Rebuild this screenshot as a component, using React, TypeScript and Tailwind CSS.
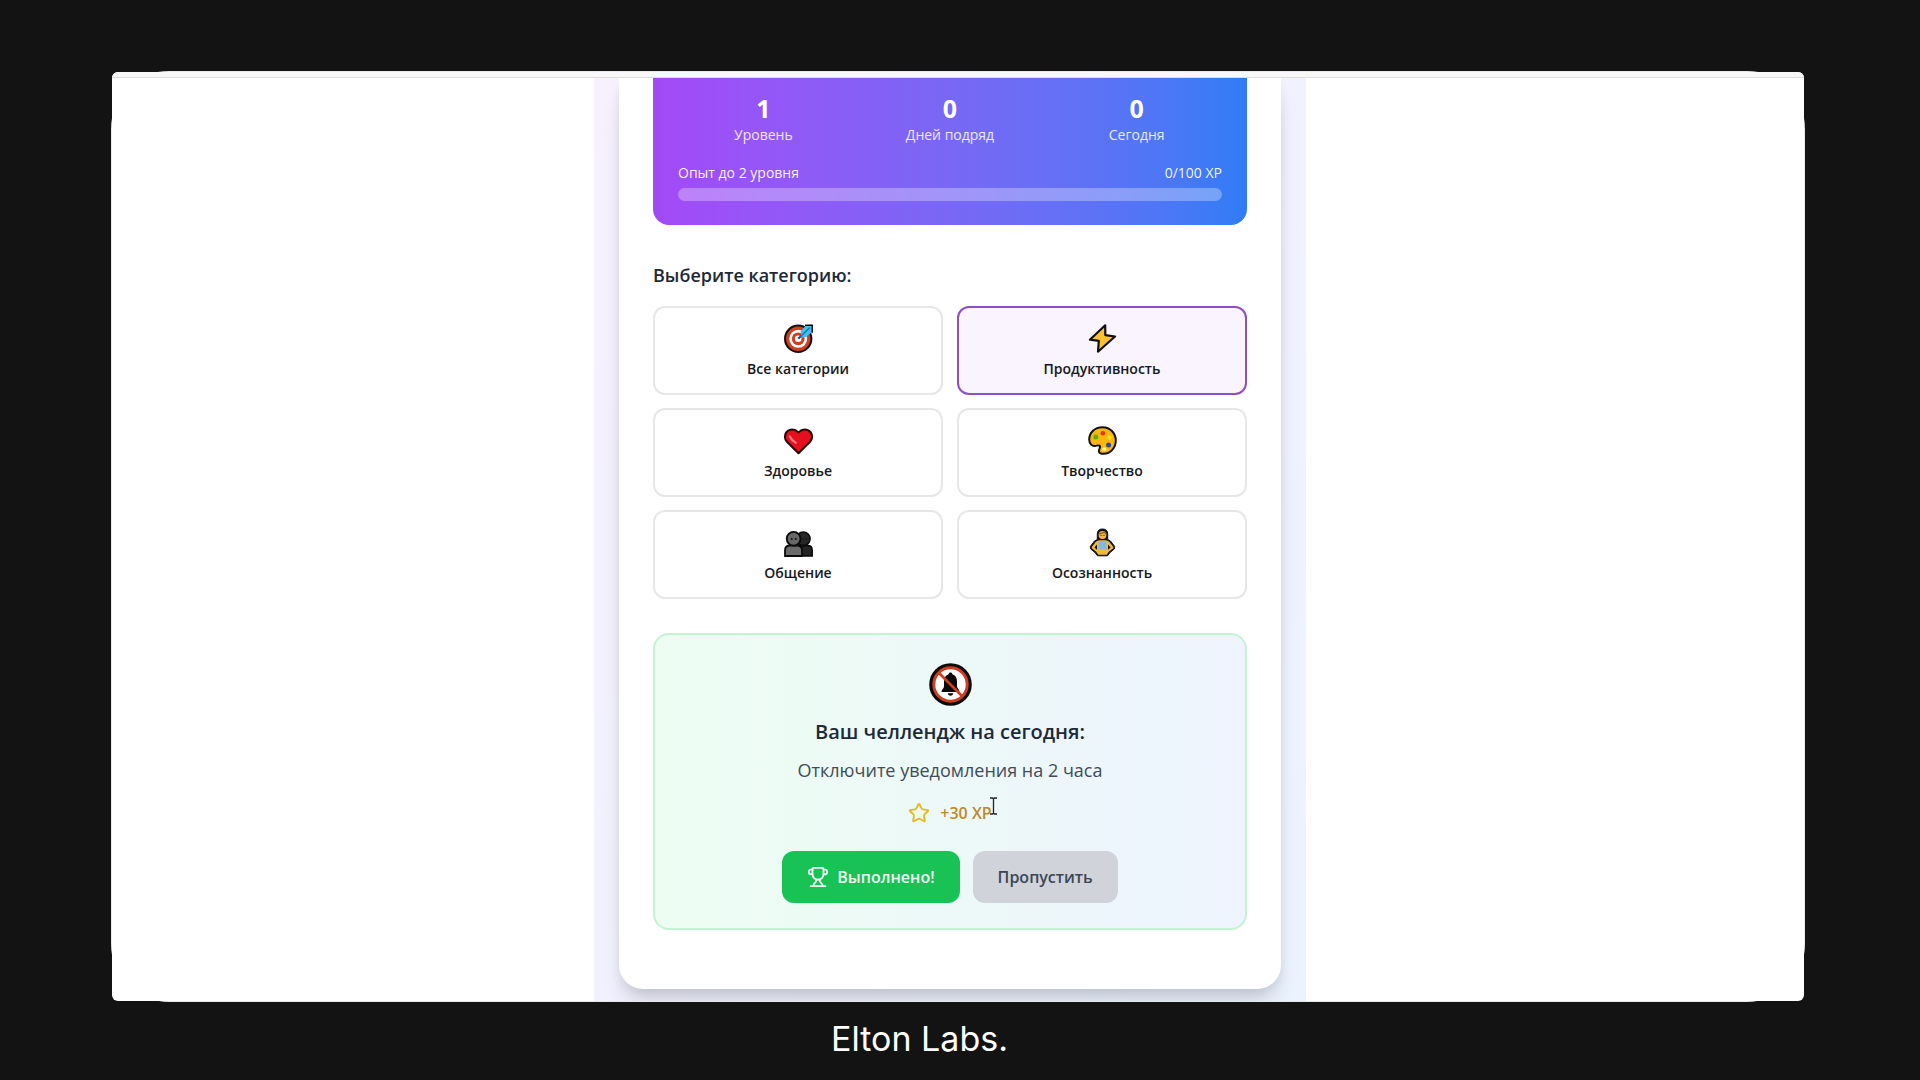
import { useState } from "react";
import type { ReactNode } from "react";
import { Star, Trophy } from "lucide-react";

function TargetIcon() {
  return (
    <svg viewBox="0 0 29 29" className="size-[29px]" aria-hidden="true">
      <circle cx="14.2" cy="14.8" r="13.2" fill="#cf3e20" stroke="#111" strokeWidth="2" />
      <circle cx="14.2" cy="14.8" r="9" fill="#fff" />
      <circle cx="14.2" cy="14.8" r="6.4" fill="#cf3e20" />
      <circle cx="14.2" cy="14.8" r="3.3" fill="#fff" />
      <path d="M14.2 14.8 20 9" stroke="#27476b" strokeWidth="2" />
      <path d="M16.5 7.5 22 1.3l3 .2.4-.9 2.8.2-.2 7.2-6.4 5.3-4.2.1Z" fill="#40c0f5" />
      <path d="m16.5 12.6 9.3-9" stroke="#1b7fb8" strokeWidth="1.6" />
      <path d="M21 1.2h7.3v7.5" fill="none" stroke="#111" strokeWidth="1.6" />
    </svg>
  );
}

function BoltIcon() {
  return (
    <svg viewBox="0 0 29 29" className="size-[29px]" aria-hidden="true">
      <path
        d="M17.2 1.3 1.9 15.7l8.9 1.2-.8 10.8L27 12.5l-9.7-1.4Z"
        fill="#fbc132"
        stroke="#111"
        strokeWidth="2.2"
        strokeLinejoin="round"
      />
    </svg>
  );
}

function HeartIcon() {
  return (
    <svg viewBox="0 0 29 29" className="size-[29px]" aria-hidden="true">
      <path
        d="M14.5 27.2 2.9 15.8C-.4 12.3.8 6.2 4.6 4.400c3.700-1.700 7.400-.6 9.900 2 2.500-2.600 6.200-3.700 9.900-2 3.800 1.800 5 7.900 1.700 11.400Z"
        fill="#e60f1e"
        stroke="#2a0508"
        strokeWidth="2"
        strokeLinejoin="round"
      />
      <path d="M5.700 10.500c1.300 2.600 3 4.600 6 6.300" fill="none" stroke="#fb7b83" strokeWidth="2.200" strokeLinecap="round" />
    </svg>
  );
}

function PaletteIcon() {
  return (
    <svg viewBox="0 0 29 29" className="size-[29px]" aria-hidden="true">
      <path
        d="M14.500 1.200C6.700 1.200 1.200 6.500 1.200 13.600c0 4.600 3 6.700 6 6.300 1.700-.2 3.200-.9 4.300-.2 1.900 1.300-.9 3.500-.6 5.600.3 1.800 2.300 2.500 4.600 2.500 7.200 0 12.300-6 12.300-13.200S22.500 1.200 14.500 1.200Z"
        fill="#fdb50f"
        stroke="#111"
        strokeWidth="2"
      />
      <circle cx="14.800" cy="7.300" r="2.300" fill="#dc3b16" />
      <circle cx="7.800" cy="11" r="2.500" fill="#54b30f" />
      <circle cx="21.600" cy="11.500" r="2.200" fill="#ffdd1a" />
      <circle cx="20.600" cy="19" r="2.500" fill="#2c4a96" />
      <circle cx="16.300" cy="23.300" r="2" fill="#fff3a8" />
    </svg>
  );
}

function PeopleIcon() {
  return (
    <svg viewBox="0 0 29 29" className="size-[29px]" aria-hidden="true">
      <path d="M14 28V22c0-3 2-4.500 4.500-4.500h5c3 0 4.700 2 4.700 4.700V28Z" fill="#222" stroke="#0a0a0a" strokeWidth="1.500" />
      <circle cx="19.300" cy="10.800" r="6.800" fill="#262626" stroke="#0a0a0a" strokeWidth="1.600" />
      <path d="M1 28V22.500c0-3 2-5 5-5h7c3 0 5 2 5 5V28Z" fill="#6b6b6b" stroke="#0a0a0a" strokeWidth="1.800" />
      <circle cx="9.600" cy="10.800" r="6.900" fill="#686868" stroke="#0a0a0a" strokeWidth="1.800" />
      <g fill="#0a0a0a">
        <circle cx="7.800" cy="11" r=".9" />
        <circle cx="11.800" cy="11" r=".9" />
        <circle cx="18.800" cy="11" r=".8" />
        <circle cx="22.300" cy="11" r=".8" />
      </g>
    </svg>
  );
}

function LotusIcon() {
  return (
    <svg viewBox="0 0 29 29" className="size-[29px]" aria-hidden="true">
      <path
        d="M9.300 11.500V6c0-3.400 2-5 5.200-5s5.200 1.600 5.200 5v5.500l2.800 1.500 4.200 5.500-.4 2.500-4.300 3.500-2.500 3.300H9.500L7 24.500 2.700 21l-.4-2.500L6.500 13Z"
        fill="#111"
        stroke="#111"
        strokeWidth="1"
        strokeLinejoin="round"
      />
      <path d="M8 13.500 3.700 19v1.300L8 23.500l2.300 3.300h8.400l2.300-3.300 4.300-3.200V19L21 13.500l-3-1.300h-7Z" fill="#f3b93f" />
      <path d="m9 16.500-2.600 3L9 21.700Zm11 0 2.600 3-2.600 2.200Z" fill="#111" />
      <path d="M10.500 13h8v8.500h-8Z" fill="#7fbbe8" />
      <circle cx="14.500" cy="7" r="3.900" fill="#f3b93f" />
      <path d="M11 5.500c2 .2 4-.4 5-1.500l2.300 2" fill="none" stroke="#9a5a24" strokeWidth="1.300" />
      <circle cx="13" cy="7.300" r=".6" fill="#111" />
      <circle cx="16" cy="7.300" r=".6" fill="#111" />
    </svg>
  );
}

function BellOffIcon() {
  return (
    <svg viewBox="0 0 43 43" className="size-[43px]" aria-hidden="true">
      <circle cx="21.500" cy="21.500" r="21.300" fill="#0b0b0b" />
      <circle cx="21.500" cy="21.500" r="16.700" fill="#fff" stroke="#cf3e20" strokeWidth="3" />
      <path
        d="M21.500 9.500c1 0 1.800.7 1.900 1.700 2.800 1 4.600 3.500 4.600 7v5.300c0 1.700 2.500 3 2.500 5.500h-18c0-2.500 2.500-3.800 2.500-5.500v-5.300c0-3.500 1.800-6 4.600-7 .1-1 .9-1.700 1.900-1.700Z"
        fill="#0b0b0b"
      />
      <path d="M18.700 30.300h5.600c-.3 1.600-1.300 2.500-2.800 2.500s-2.500-.9-2.800-2.500Z" fill="#0b0b0b" />
      <path d="m9.500 9.500 24 24" stroke="#cf3e20" strokeWidth="2.600" />
    </svg>
  );
}

const stats = [
  { value: "1", label: "Уровень" },
  { value: "0", label: "Дней подряд" },
  { value: "0", label: "Сегодня" },
];

const categories: { name: string; icon: ReactNode }[] = [
  { name: "Все категории", icon: <TargetIcon /> },
  { name: "Продуктивность", icon: <BoltIcon /> },
  { name: "Здоровье", icon: <HeartIcon /> },
  { name: "Творчество", icon: <PaletteIcon /> },
  { name: "Общение", icon: <PeopleIcon /> },
  { name: "Осознанность", icon: <LotusIcon /> },
];

function StatsCard() {
  return (
    <section className="rounded-b-2xl bg-linear-to-r from-[#a349f7] to-[#2f7cf5] px-[25px] pt-[14px] pb-6 text-white">
      <dl className="grid grid-cols-3 gap-4 text-center">
        {stats.map((s) => (
          <div key={s.label} className="flex flex-col-reverse">
            <dt className="text-[14px] leading-[22px] text-white/85">{s.label}</dt>
            <dd className="text-[25px] leading-8 font-bold">{s.value}</dd>
          </div>
        ))}
      </dl>
      <div className="mt-4 mb-1 flex justify-between text-[14px] leading-[22px] text-white/95">
        <span id="xp-label">Опыт до 2 уровня</span>
        <span>0/100 XP</span>
      </div>
      <div
        role="progressbar"
        aria-labelledby="xp-label"
        aria-valuenow={0}
        aria-valuemin={0}
        aria-valuemax={100}
        className="h-[13px] rounded-full bg-white/30"
      />
    </section>
  );
}

function ChallengeCard() {
  return (
    <section className="mt-[34px] flex flex-col items-center rounded-2xl border-2 border-[#c3f3d3] bg-linear-to-r from-[#edfdf2] to-[#edf4fe] px-6 pt-7 pb-[25px] text-center">
      <BellOffIcon />
      <h3 className="mt-3 text-[20px] leading-7 font-semibold text-[#1e2939]">Ваш челлендж на сегодня:</h3>
      <p className="mt-2.5 text-[18px] leading-7 text-[#414b59]">Отключите уведомления на 2 часа</p>
      <div className="relative mt-[17px] flex items-center gap-2.5 text-[16px] leading-6 font-semibold text-[#bd8a26]">
        <Star className="size-[22px] text-[#e6b91e]" aria-hidden="true" />
        <span>+30 XP</span>
        <svg viewBox="0 0 9 18" className="absolute -top-1 -right-1.5 h-[18px] w-[9px]" aria-hidden="true">
          <path d="M1 1h2.500l1 .8 1-.8H8M4.500 1.500v15M1 17h2.500l1-.8 1 .8H8" fill="none" stroke="#222" strokeWidth="1.300" />
        </svg>
      </div>
      <div className="mt-[26px] flex gap-[13px] text-[16px] leading-6">
        <button className="flex items-center gap-2 rounded-xl bg-[#19c255] px-[25px] py-3.5 font-semibold text-[#effcf3]">
          <Trophy className="size-[22px]" aria-hidden="true" />
          Выполнено!
        </button>
        <button className="rounded-xl bg-[#d0d3da] px-[25px] py-3.5 font-semibold text-[#3b4656]">Пропустить</button>
      </div>
    </section>
  );
}

export default function App() {
  const [selected, setSelected] = useState("Продуктивность");

  return (
    <div className="flex min-h-screen flex-col bg-[#131313] pt-[71px] pr-[115px] pl-[111px] font-['Open_Sans','Noto_Sans',sans-serif]">
      <div className="rounded-[58px] bg-[#e9e9e9] p-px">
        <div className="overflow-hidden rounded-md bg-white">
          <div className="h-1.5 border-b border-[#dcdcdc] bg-[#f8f8f8]" />
          <div className="flex justify-center pr-4">
            <div className="w-full max-w-[712px] overflow-hidden bg-linear-to-br from-[#f7f1fe] to-[#ebf3ff] px-[25px] pb-3">
              <main className="rounded-b-3xl bg-white px-[34px] pb-[59px] shadow-[0_20px_25px_-5px_rgb(0_0_0/0.12),0_6px_12px_-2px_rgb(0_0_0/0.1)]">
                <StatsCard />
                <h2 className="mt-9 text-[18px] leading-7 font-semibold text-[#1e2939]">Выберите категорию:</h2>
                <div className="mt-[17px] grid grid-cols-2 gap-x-3.5 gap-y-[13px]">
                  {categories.map((c) => (
                    <button
                      key={c.name}
                      aria-pressed={c.name === selected}
                      onClick={() => setSelected(c.name)}
                      className={
                        c.name === selected
                          ? "flex flex-col items-center gap-[5px] rounded-xl border-2 border-[#8f4fc4] bg-[#f9f4fe] pt-4 pb-[13px]"
                          : "flex flex-col items-center gap-[5px] rounded-xl border-2 border-[#e6e7e9] bg-white pt-4 pb-[13px]"
                      }
                    >
                      {c.icon}
                      <span className="text-[14px] leading-[22px] font-semibold text-[#15181d]">{c.name}</span>
                    </button>
                  ))}
                </div>
                <ChallengeCard />
              </main>
            </div>
          </div>
        </div>
      </div>
      <footer className="pt-[17px] pr-[77px] text-center font-['Inter',sans-serif] text-[34px] leading-10 text-white">
        Elton Labs.
      </footer>
    </div>
  );
}
